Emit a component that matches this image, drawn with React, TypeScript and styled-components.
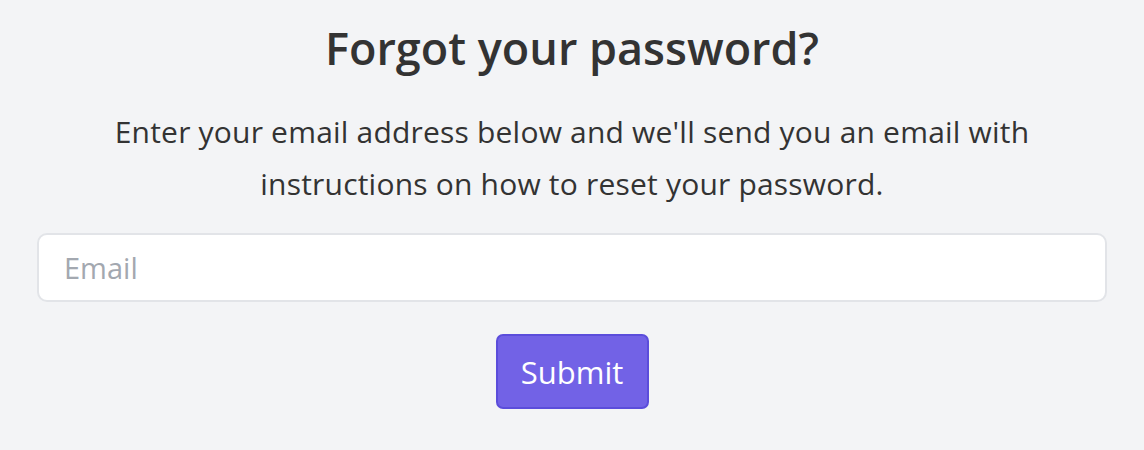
import React, { useState, FormEvent } from 'react'
import styled, { createGlobalStyle } from 'styled-components'

const GlobalStyle = createGlobalStyle`
  html, body {
    margin: 0;
    padding: 0;
    background-color: #f3f4f6;
  }

  body {
    font-family: 'Open Sans', Lato, sans-serif;
    color: #333333;
  }

  * {
    box-sizing: border-box;
  }
`

export default function App() {
  const [email, setEmail] = useState('')

  const onSubmit = (e: FormEvent) => {
    e.preventDefault()
  }

  return (
    <>
      <GlobalStyle />
      <Page>
        <Form onSubmit={onSubmit}>
          <Title>Forgot your password?</Title>
          <Info>
            Enter your email address below and we'll send you an email with
            <br />
            instructions on how to reset your password.
          </Info>
          <EmailInput
            type="email"
            placeholder="Email"
            value={email}
            onChange={e => setEmail(e.currentTarget.value)}
          />
          <SubmitButton type="submit">Submit</SubmitButton>
        </Form>
      </Page>
    </>
  )
}

const Page = styled.div`
  min-height: 450px;
  padding: 20px 37px 0;
`

const Form = styled.form`
  display: flex;
  flex-direction: column;
  align-items: center;
`

const Title = styled.h1`
  margin: 0;
  font-size: 45px;
  line-height: 56px;
  font-weight: 600;
  color: #333333;
`

const Info = styled.p`
  margin: 30px 0 0;
  font-size: 30px;
  line-height: 52px;
  letter-spacing: 0.2px;
  text-align: center;
  color: #333333;
`

const EmailInput = styled.input`
  margin-top: 23px;
  width: 100%;
  height: 69px;
  padding: 0 25px;
  border: 2px solid #e2e4e8;
  border-radius: 10px;
  background: #ffffff;
  font-family: inherit;
  font-size: 29px;
  color: #333333;
  outline: none;

  &::placeholder {
    color: #a3a8b0;
  }
`

const SubmitButton = styled.button`
  margin-top: 32px;
  width: 153px;
  height: 75px;
  border: 2px solid #5b4ddb;
  border-radius: 7px;
  background-color: #7262e6;
  color: #ffffff;
  font-family: inherit;
  font-size: 31px;
  cursor: pointer;
`
